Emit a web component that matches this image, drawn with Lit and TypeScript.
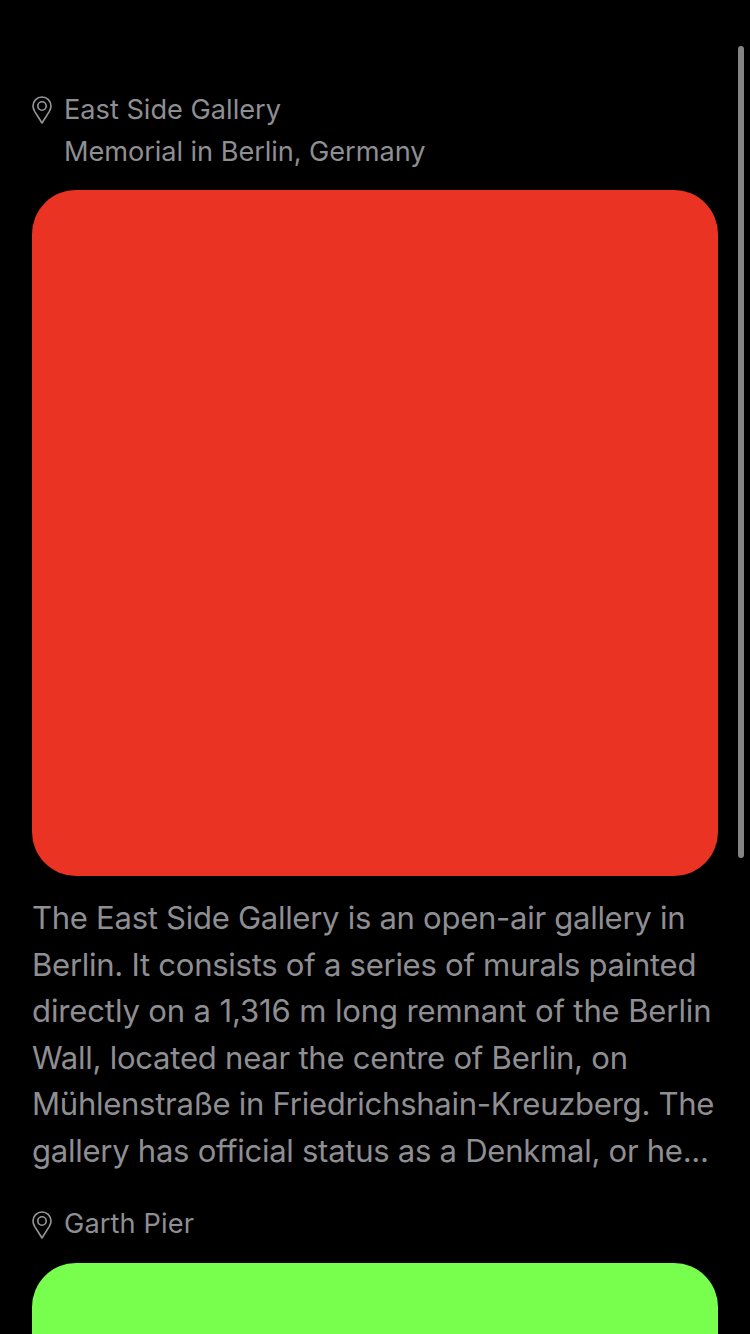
import { LitElement, html, css } from "lit";
import { customElement, property } from "lit/decorators.js";

@customElement("text-line")
class TextLine extends LitElement {
  @property() text = "";
  @property({ type: Number }) width = 0;
  static styles = css`
    :host { display: block; white-space: pre; }
    svg { display: block; overflow: visible; width: 100%; height: 100%; }
    text { fill: currentColor; font: inherit; }
  `;
  render() {
    return html`<svg><text x="0" y="75%" textLength=${this.width} lengthAdjust="spacing">${this.text}</text></svg>`;
  }
}

@customElement("app-root")
class AppRoot extends LitElement {
  static styles = css`
    :host { display: block; position: relative; height: 1334px; overflow: hidden; box-sizing: border-box;
      background: #000; color: #8e8e93; padding: 86.5px 32px 0; font-family: Inter, "Liberation Sans", sans-serif;
      font-weight: 375; }
    .head { display: grid; grid-template-columns: 20px 1fr; column-gap: 12px; }
    .pin { width: 20px; height: 28px; margin-top: 9.5px; }
    .head text-line { height: 42px; font-size: 27.2px; }
    .card { height: 686px; border-radius: 44px; margin-top: 19.5px; background: #ea3323; }
    .green { background: #78ff4d; }
    .desc { margin: 18.1px 0 27.8px 0; }
    .desc text-line { height: 46.6px; font-size: 31.1px; }
    .bar { position: absolute; right: 6px; top: 46px; width: 6px; height: 812px; border-radius: 3px; background: #848484; }
  `;
  pin() {
    return html`<svg class="pin" viewBox="0 0 20 28" fill="none" stroke="#98989b" stroke-width="1.6" stroke-linejoin="round">
      <path d="M10 27L2.8 15.6C1.6 13.6 1 12 1 10a9 9 0 0 1 18 0c0 2-.6 3.6-1.8 5.6Z"/><circle cx="10" cy="10" r="4.2"/></svg>`;
  }
  render() {
    const lines: [string, number][] = [
      ["The East Side Gallery is an open-air gallery in", 653.5],
      ["Berlin. It consists of a series of murals painted", 664.5],
      ["directly on a 1,316 m long remnant of the Berlin", 679.5],
      ["Wall, located near the centre of Berlin, on", 596],
      ["Mühlenstraße in Friedrichshain-Kreuzberg. The", 682.5],
      ["gallery has official status as a Denkmal, or he...", 677],
    ];
    return html`
      <div class="head">${this.pin()}<div>
        <text-line text="East Side Gallery" width="217"></text-line>
        <text-line text="Memorial in Berlin, Germany" width="361.5"></text-line></div></div>
      <div class="card"></div>
      <div class="desc">${lines.map(([t, w]) => html`<text-line text=${t} width=${w}></text-line>`)}</div>
      <div class="head">${this.pin()}<div><text-line text="Garth Pier" width="130"></text-line></div></div>
      <div class="card green"></div>
      <div class="bar"></div>`;
  }
}
